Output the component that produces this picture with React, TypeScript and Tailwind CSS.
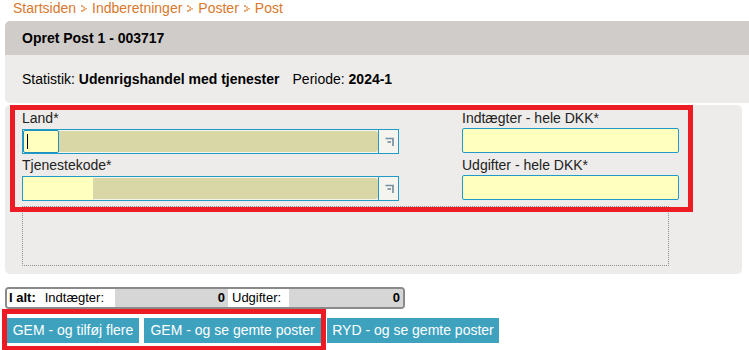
import React from "react";

const Sep = () => (
  <svg width="6" height="7" viewBox="0 0 6 7" className="mx-[5px] inline-block" aria-hidden>
    <g fill="#e9a872">
      <rect x="0" y="0" width="2" height="2" />
      <rect x="2" y="1.5" width="2" height="2" />
      <rect x="4" y="3" width="2" height="1.5" />
      <rect x="2" y="4" width="2" height="2" />
      <rect x="0" y="5" width="2" height="2" />
    </g>
  </svg>
);

const ComboIcon = () => (
  <svg width="11" height="11" viewBox="0 0 11 11" aria-hidden>
    <path d="M1.5 2.5 H9 V10" stroke="#7690a3" strokeWidth="1.7" fill="none" />
    <path d="M3.5 6 H7" stroke="#7690a3" strokeWidth="1.7" fill="none" />
  </svg>
);

function Combo({ yellowW, cursor }: { yellowW: number; cursor?: boolean }) {
  return (
    <div className="flex h-[25px] w-[377px] items-stretch border border-[#1e9cc7] bg-[#f5f4ef]">
      <div
        className={
          "relative flex-none bg-[#ffffc0] " +
          (cursor ? "rounded-[2px] border border-[#1e8fc0]" : "")
        }
        style={{ width: yellowW }}
      >
        {cursor && <div className="absolute left-[3px] top-[3px] h-[15px] w-[1px] bg-black" />}
      </div>
      <div className="my-[1px] flex-1 rounded-r-[3px] bg-[#d9d7a5]" />
      <div className="w-[1px] bg-[#1e9cc7]" />
      <div className="flex w-[19px] items-center justify-center pl-[1px]">
        <ComboIcon />
      </div>
    </div>
  );
}

export default function App() {
  return (
    <div
      className="relative h-[350px] w-[749px] overflow-hidden bg-white text-[14px] text-[#111]"
      style={{ fontFamily: '"Liberation Sans", Arial, sans-serif' }}
    >
      {/* Breadcrumb */}
      <div className="flex h-[21px] items-center pl-[13px] pb-[4px] text-[14px] text-[#d9782d]">
        <span>Startsiden</span>
        <Sep />
        <span>Indberetninger</span>
        <Sep />
        <span>Poster</span>
        <Sep />
        <span>Post</span>
      </div>

      {/* Header */}
      <div className="ml-[5px]">
        <div className="flex h-[34px] items-center rounded-tl-[5px] bg-[#d0ccc9] pl-[17px] text-[14px] font-bold text-black">
          Opret Post 1 - 003717
        </div>
        <div className="flex h-[48px] items-center rounded-bl-[5px] bg-[#eeecea] pl-[17px] text-[14px] text-black">
          <span>Statistik:&nbsp;</span>
          <span className="font-bold">Udenrigshandel med tjenester</span>
          <span className="ml-[13px]">Periode:&nbsp;</span>
          <span className="font-bold">2024-1</span>
        </div>
      </div>

      {/* Form panel */}
      <div className="ml-[5px] mt-[2px] w-[737px] rounded-[5px] bg-[#eeecea] pl-[17px] pt-[5px] pb-[8px]">
        <div className="flex">
          <div className="w-[377px]">
            <div className="h-[19px] leading-[17px] text-[#222]">Land*</div>
            <Combo yellowW={36} cursor />
            <div className="mt-[3px] h-[19px] leading-[17px] text-[#222]">Tjenestekode*</div>
            <Combo yellowW={70} />
          </div>
          <div className="ml-[63px] w-[217px]">
            <div className="h-[18px] leading-[17px] text-[#222]">Indtægter - hele DKK*</div>
            <div className="h-[25px] rounded-[2px] border border-[#1e9cc7] bg-[#ffffc0]" />
            <div className="mt-[4px] h-[18px] leading-[17px] text-[#222]">Udgifter - hele DKK*</div>
            <div className="h-[25px] rounded-[2px] border border-[#1e9cc7] bg-[#ffffc0]" />
          </div>
        </div>
        <div className="mt-[5px] h-[60px] w-[647px] border border-dotted border-[#8d8d8d]" />
      </div>

      {/* Totals */}
      <div className="ml-[5px] mt-[13px] flex h-[22px] w-[400px] items-stretch overflow-hidden rounded-[4px] border-2 border-[#8a8a8a] text-[13px] text-black">
        <div className="flex w-[108px] items-center bg-white pl-[2px]">
          <span className="font-bold">I alt:</span>
          <span className="ml-[9px]">Indtægter:</span>
        </div>
        <div className="flex w-[113px] items-center justify-end bg-[#d6d6d6] pr-[3px] font-bold">0</div>
        <div className="flex w-[61px] items-center bg-white pl-[4px]">Udgifter:</div>
        <div className="flex flex-1 items-center justify-end bg-[#d6d6d6] pr-[3px] font-bold">0</div>
      </div>

      {/* Buttons */}
      <div className="ml-[7px] mt-[9px] flex gap-[5px] text-[14px] text-white">
        <div className="flex h-[25px] w-[132px] items-center justify-center bg-[#3ea2bf]">GEM - og tilføj flere</div>
        <div className="flex h-[25px] w-[177px] items-center justify-center bg-[#3ea2bf]">GEM - og se gemte poster</div>
        <div className="ml-[1px] flex h-[25px] w-[172px] items-center justify-center bg-[#3ea2bf]">RYD - og se gemte poster</div>
      </div>

      {/* Annotation overlays */}
      <div className="pointer-events-none absolute left-[10px] top-[105px] h-[107px] w-[683px] border-[5px] border-[#ed1c24]" />
      <div className="pointer-events-none absolute left-[2px] top-[309px] h-[42px] w-[324px] border-[5px] border-[#ed1c24]" />
    </div>
  );
}
